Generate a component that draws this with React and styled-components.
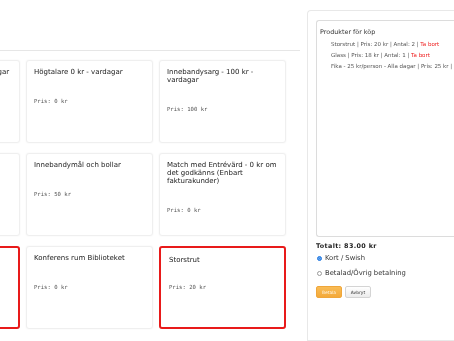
import React from 'react';
import styled, { createGlobalStyle } from 'styled-components';

const GlobalStyle = createGlobalStyle`
  html, body {
    margin: 0;
    padding: 0;
    background: #fff;
    overflow: hidden;
  }
  body {
    font-family: "DejaVu Sans", Verdana, sans-serif;
    color: #333;
    -webkit-font-smoothing: antialiased;
  }
`;

const Page = styled.div`
  display: flex;
  width: 454px;
  height: 341px;
  overflow: hidden;
  will-change: transform;
`;

const Main = styled.div`
  width: 300px;
  flex-shrink: 0;
  overflow: hidden;
`;

const Header = styled.div`
  height: 50px;
  border-bottom: 1px solid #e6e6e6;
`;

const Grid = styled.div`
  display: grid;
  grid-template-columns: repeat(3, 127px);
  grid-auto-rows: 83px;
  column-gap: 6px;
  row-gap: 10px;
  margin-left: -107px;
  padding-top: 9px;
`;

const Card = styled.div`
  box-sizing: border-box;
  background: #fff;
  border-radius: 3px;
  border: ${p => (p.$selected ? '2px solid #e81a1a' : '1px solid #efefef')};
  box-shadow: ${p => (p.$selected ? 'none' : '0 0 2px rgba(0,0,0,0.06)')};
  padding: ${p => (p.$selected ? '8px 8px' : '7px 7px')};
`;

const CardTitle = styled.div`
  font-size: 7px;
  line-height: 8px;
  color: #222;
`;

const Price = styled.div`
  margin-top: ${p => (p.$selected ? 19 : 21)}px;
  font-family: "DejaVu Sans Mono", monospace;
  font-size: 5.6px;
  line-height: 8px;
  color: #555;
`;

const Side = styled.div`
  margin-top: 10px;
  margin-left: 7px;
  flex: 1;
  border: 1px solid #e8e8e8;
  border-right: none;
  border-radius: 4px 0 0 0;
  padding: 9px 0 0 8px;
`;

const CartBox = styled.div`
  box-sizing: border-box;
  height: 217px;
  border: 1px solid #dcdcdc;
  border-right: none;
  border-radius: 3px 0 0 3px;
  padding: 7px 0 0 3px;
  overflow: hidden;
  white-space: nowrap;
`;

const CartHeading = styled.div`
  font-size: 6.4px;
  line-height: 8px;
  color: #333;
  margin-bottom: 3px;
`;

const CartList = styled.div`
  padding-left: 11px;
`;

const CartItem = styled.div`
  font-size: 5.5px;
  line-height: 11px;
  color: #555;
`;

const Remove = styled.span`
  color: #ee1c1c;
`;

const Total = styled.div`
  margin-top: 5px;
  font-size: 6.4px;
  font-weight: bold;
  letter-spacing: 0.35px;
  line-height: 8px;
  color: #222;
`;

const Option = styled.div`
  display: flex;
  align-items: center;
  gap: 3px;
  margin-top: ${p => p.$gap}px;
  padding-left: 1px;
  font-size: 6.8px;
  line-height: 9px;
  color: #333;
`;

const Radio = styled.span`
  box-sizing: border-box;
  width: 5px;
  height: 5px;
  border-radius: 50%;
  border: 1px solid ${p => (p.$checked ? '#2a7de1' : '#999')};
  background: ${p => (p.$checked ? '#2a7de1' : '#fff')};
  box-shadow: ${p => (p.$checked ? 'inset 0 0 0 1px #6aa8f0' : 'none')};
`;

const Buttons = styled.div`
  display: flex;
  gap: 3px;
  margin-top: 8px;
`;

const Button = styled.button`
  box-sizing: border-box;
  width: 26px;
  height: 12px;
  padding: 0;
  border-radius: 2px;
  font-family: "DejaVu Sans", sans-serif;
  font-size: 4.4px;
  cursor: pointer;
  border: 1px solid ${p => (p.$primary ? '#efa63a' : '#d4d4d4')};
  background: ${p =>
    p.$primary
      ? 'linear-gradient(#f9bc55, #f3a93a)'
      : 'linear-gradient(#ffffff, #ececec)'};
  color: ${p => (p.$primary ? '#fff4e0' : '#333')};
`;

const cards = [
  { title: 'Bordtennisbord 0 kr - vardagar', price: '0 kr' },
  { title: 'Högtalare 0 kr - vardagar', price: '0 kr' },
  { title: 'Innebandysarg - 100 kr - vardagar', price: '100 kr' },
  { title: '', price: '' },
  { title: 'Innebandymål och bollar', price: '50 kr' },
  { title: 'Match med Entrévärd - 0 kr om det godkänns (Enbart fakturakunder)', price: '0 kr' },
  { title: '', price: '', selected: true },
  { title: 'Konferens rum Biblioteket', price: '0 kr' },
  { title: 'Storstrut', price: '20 kr', selected: true },
];

const cart = [
  { name: 'Storstrut', price: '20 kr', qty: 2 },
  { name: 'Glass', price: '18 kr', qty: 1 },
  { name: 'Fika - 25 kr/person - Alla dagar', price: '25 kr', qty: 1 },
];

export default function App() {
  return (
    <>
      <GlobalStyle />
      <Page>
        <Main>
          <Header />
          <Grid>
            {cards.map((card, i) => (
              <Card key={i} $selected={card.selected}>
                {card.title && <CardTitle>{card.title}</CardTitle>}
                {card.price && <Price $selected={card.selected}>Pris: {card.price}</Price>}
              </Card>
            ))}
          </Grid>
        </Main>
        <Side>
          <CartBox>
            <CartHeading>Produkter för köp</CartHeading>
            <CartList>
              {cart.map(item => (
                <CartItem key={item.name}>
                  {item.name} | Pris: {item.price} | Antal: {item.qty} | <Remove>Ta bort</Remove>
                </CartItem>
              ))}
            </CartList>
          </CartBox>
          <Total>Totalt: 83.00 kr</Total>
          <Option $gap={4}>
            <Radio $checked />
            Kort / Swish
          </Option>
          <Option $gap={6}>
            <Radio />
            Betalad/Övrig betalning
          </Option>
          <Buttons>
            <Button $primary>Betala</Button>
            <Button>Avbryt</Button>
          </Buttons>
        </Side>
      </Page>
    </>
  );
}
